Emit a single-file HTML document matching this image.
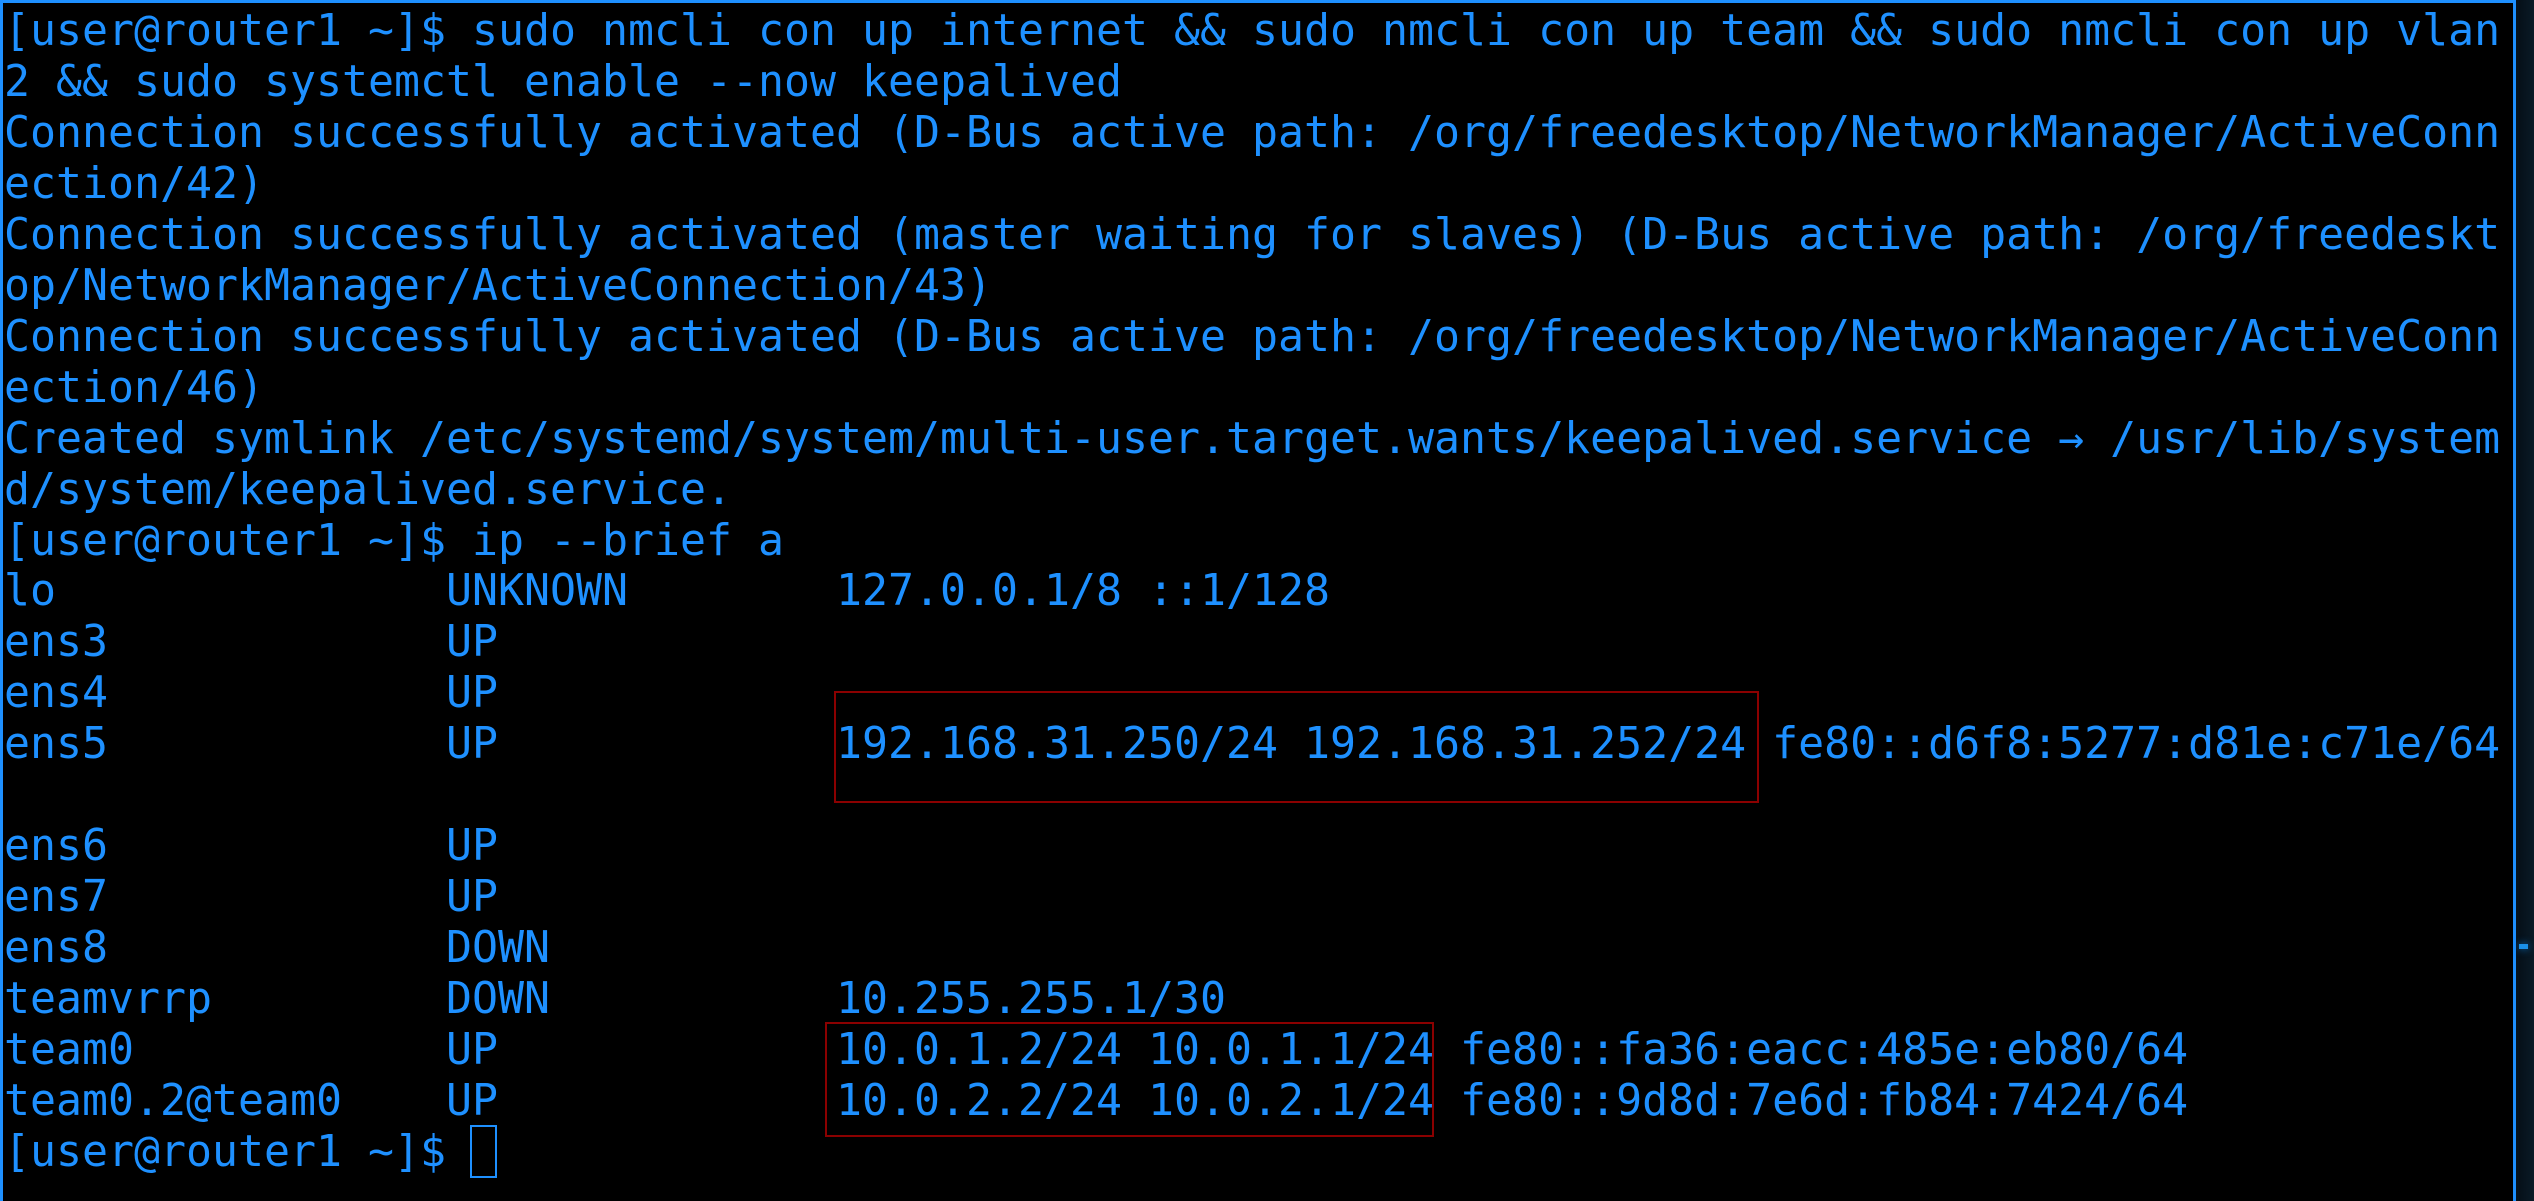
<!DOCTYPE html>
<html><head><meta charset="utf-8"><style>
html,body{margin:0;padding:0;width:2534px;height:1201px;overflow:hidden;background:#06121c;}
.bg{position:absolute;left:2519px;top:0;width:15px;height:1201px;background:linear-gradient(90deg,#051019,#0a1a26);}
.term{position:absolute;left:0;top:0;width:2516px;height:1201px;background:#000;border-top:3px solid #1e90ff;border-left:3px solid #1e90ff;border-right:3px solid #1e90ff;box-sizing:border-box;}
pre{position:absolute;left:1px;top:3px;margin:0;font-family:"DejaVu Sans Mono","Liberation Mono",monospace;font-size:43.2px;line-height:50.95px;color:#1e90ff;white-space:pre;}
.box{position:absolute;border:2px solid #8b0000;box-sizing:border-box;}
.cur{position:absolute;left:470px;top:1125px;width:27px;height:53px;border:2px solid #1e90ff;box-sizing:border-box;}
.tick{position:absolute;left:2519px;top:944px;width:9px;height:5px;background:#1a8fe8;box-shadow:0 0 8px #0a6fc0;}
</style></head><body>
<div class="bg"></div>
<div class="term">
<pre>[user@router1 ~]$ sudo nmcli con up internet &amp;&amp; sudo nmcli con up team &amp;&amp; sudo nmcli con up vlan
2 &amp;&amp; sudo systemctl enable --now keepalived
Connection successfully activated (D-Bus active path: /org/freedesktop/NetworkManager/ActiveConn
ection/42)
Connection successfully activated (master waiting for slaves) (D-Bus active path: /org/freedeskt
op/NetworkManager/ActiveConnection/43)
Connection successfully activated (D-Bus active path: /org/freedesktop/NetworkManager/ActiveConn
ection/46)
Created symlink /etc/systemd/system/multi-user.target.wants/keepalived.service → /usr/lib/system
d/system/keepalived.service.
[user@router1 ~]$ ip --brief a
lo               UNKNOWN        127.0.0.1/8 ::1/128
ens3             UP
ens4             UP
ens5             UP             192.168.31.250/24 192.168.31.252/24 fe80::d6f8:5277:d81e:c71e/64

ens6             UP
ens7             UP
ens8             DOWN
teamvrrp         DOWN           10.255.255.1/30
team0            UP             10.0.1.2/24 10.0.1.1/24 fe80::fa36:eacc:485e:eb80/64
team0.2@team0    UP             10.0.2.2/24 10.0.2.1/24 fe80::9d8d:7e6d:fb84:7424/64
[user@router1 ~]$ </pre>
</div>
<div class="box" style="left:834px;top:691px;width:925px;height:112px;"></div>
<div class="box" style="left:825px;top:1022px;width:609px;height:115px;"></div>
<div class="cur"></div>
<div class="tick"></div>
</body></html>
